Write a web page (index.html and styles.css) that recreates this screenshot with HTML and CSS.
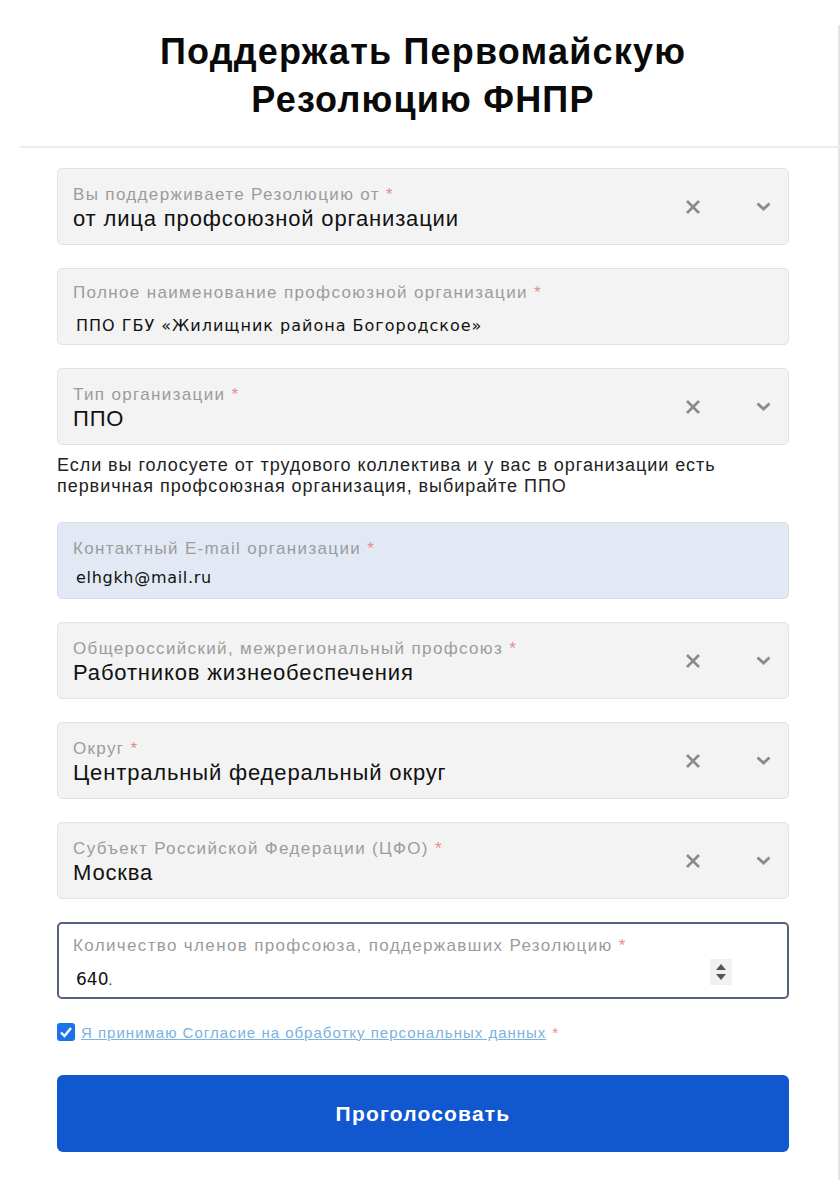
FILE: index.html
```html
<!DOCTYPE html>
<html lang="ru">
<head>
  <meta charset="UTF-8">
  <title>Поддержать Первомайскую Резолюцию ФНПР</title>
  <link rel="stylesheet" href="styles.css">
</head>
<body>

<div class="page">
  <header class="head">
    <h1>Поддержать Первомайскую<br>Резолюцию ФНПР</h1>
  </header>

  <form class="form">
    <div class="field">
      <div class="field-body">
        <div class="label">Вы поддерживаете Резолюцию от <span class="req">*</span></div>
        <div class="value">от лица профсоюзной организации</div>
      </div>
      <svg class="clear" width="16" height="14" viewBox="0 0 16 14"><path d="M2 1 L14 13 M14 1 L2 13" stroke="#8a8a8a" stroke-width="2.6"/></svg>
      <svg class="chevron" width="15" height="9" viewBox="0 0 15 9"><path d="M1.5 1.5 L7.5 7 L13.5 1.5" fill="none" stroke="#8a8a8a" stroke-width="2.8"/></svg>
    </div>

    <div class="field">
      <div class="field-body">
        <div class="label">Полное наименование профсоюзной организации <span class="req">*</span></div>
        <div class="value typed">ППО ГБУ «Жилищник района Богородское»</div>
      </div>
    </div>

    <div class="field">
      <div class="field-body">
        <div class="label">Тип организации <span class="req">*</span></div>
        <div class="value">ППО</div>
      </div>
      <svg class="clear" width="16" height="14" viewBox="0 0 16 14"><path d="M2 1 L14 13 M14 1 L2 13" stroke="#8a8a8a" stroke-width="2.6"/></svg>
      <svg class="chevron" width="15" height="9" viewBox="0 0 15 9"><path d="M1.5 1.5 L7.5 7 L13.5 1.5" fill="none" stroke="#8a8a8a" stroke-width="2.8"/></svg>
    </div>
    <p class="hint">Если вы голосуете от трудового коллектива и у вас в организации есть первичная профсоюзная организация, выбирайте ППО</p>

    <div class="field autofill">
      <div class="field-body">
        <div class="label">Контактный E-mail организации <span class="req">*</span></div>
        <div class="value typed">elhgkh@mail.ru</div>
      </div>
    </div>

    <div class="field">
      <div class="field-body">
        <div class="label">Общероссийский, межрегиональный профсоюз <span class="req">*</span></div>
        <div class="value">Работников жизнеобеспечения</div>
      </div>
      <svg class="clear" width="16" height="14" viewBox="0 0 16 14"><path d="M2 1 L14 13 M14 1 L2 13" stroke="#8a8a8a" stroke-width="2.6"/></svg>
      <svg class="chevron" width="15" height="9" viewBox="0 0 15 9"><path d="M1.5 1.5 L7.5 7 L13.5 1.5" fill="none" stroke="#8a8a8a" stroke-width="2.8"/></svg>
    </div>

    <div class="field">
      <div class="field-body">
        <div class="label">Округ <span class="req">*</span></div>
        <div class="value">Центральный федеральный округ</div>
      </div>
      <svg class="clear" width="16" height="14" viewBox="0 0 16 14"><path d="M2 1 L14 13 M14 1 L2 13" stroke="#8a8a8a" stroke-width="2.6"/></svg>
      <svg class="chevron" width="15" height="9" viewBox="0 0 15 9"><path d="M1.5 1.5 L7.5 7 L13.5 1.5" fill="none" stroke="#8a8a8a" stroke-width="2.8"/></svg>
    </div>

    <div class="field">
      <div class="field-body">
        <div class="label">Субъект Российской Федерации (ЦФО) <span class="req">*</span></div>
        <div class="value">Москва</div>
      </div>
      <svg class="clear" width="16" height="14" viewBox="0 0 16 14"><path d="M2 1 L14 13 M14 1 L2 13" stroke="#8a8a8a" stroke-width="2.6"/></svg>
      <svg class="chevron" width="15" height="9" viewBox="0 0 15 9"><path d="M1.5 1.5 L7.5 7 L13.5 1.5" fill="none" stroke="#8a8a8a" stroke-width="2.8"/></svg>
    </div>

    <div class="field focused">
      <div class="field-body">
        <div class="label">Количество членов профсоюза, поддержавших Резолюцию <span class="req">*</span></div>
        <div class="value typed">640<span class="caret">.</span></div>
      </div>
      <svg class="spin" width="22" height="26" viewBox="0 0 22 26"><rect width="22" height="26" fill="#f1f1f1"/><path d="M6 11 L11 5 L16 11 Z M6 15 L11 21 L16 15 Z" fill="#555"/></svg>
    </div>

    <label class="agree">
      <span class="check"><svg width="18" height="18" viewBox="0 0 18 18"><rect width="18" height="18" rx="3" fill="#1a73e8"/><path d="M4 9.5 L7.5 13 L14 5" fill="none" stroke="#fff" stroke-width="2.4"/></svg></span>
      <a href="#" class="agree-link">Я принимаю Согласие на обработку персональных данных</a>
      <span class="req">*</span>
    </label>

    <button type="button" class="submit">Проголосовать</button>
  </form>
</div>

</body>
</html>
```

FILE: styles.css
```css
body {
  margin: 0;
  background: #fff;
  font-family: "Liberation Sans", Arial, sans-serif;
  color: #111;
}
.page {
  width: 818px;
  margin: 25px 0 20px 20px;
  border-right: 2px solid #e4e4e4;
  min-height: 1155px;
}
.head {
  border-bottom: 2px solid #ececec;
  padding: 3px 0 22px;
  margin-right: -2px;
}
h1 {
  margin: 0;
  padding-right: 14px;
  text-align: center;
  font-size: 36px;
  line-height: 48px;
  font-weight: bold;
  color: #0a0a0a;
  letter-spacing: 1.2px;
}
.form {
  padding: 20px 49px 0 37px;
  display: flex;
  flex-direction: column;
}
.field {
  display: flex;
  align-items: center;
  height: 77px;
  box-sizing: border-box;
  background: #f3f3f3;
  border: 1px solid #e2e2e2;
  border-radius: 5px;
  padding: 0 17px 0 15px;
  margin-bottom: 23px;
}
.field-body {
  flex: 1;
  padding-top: 5px;
}
.label {
  color: #9c9c9c;
  font-size: 17px;
  line-height: 20px;
  letter-spacing: 1.35px;
}
.req {
  color: #e98a8a;
}
.value {
  font-size: 22px;
  line-height: 28px;
  color: #111;
  letter-spacing: 0.85px;
}
.value.typed {
  font-family: "DejaVu Sans", sans-serif;
  font-size: 16px;
  line-height: 20px;
  letter-spacing: 1px;
  margin-top: 13px;
  padding-left: 3px;
}
.clear {
  margin-right: 55px;
}
.hint {
  margin: -13px 0 25px;
  font-size: 18px;
  line-height: 21px;
  letter-spacing: 0.95px;
  color: #222;
}
.autofill {
  background: #e3e9f4;
  border-color: #d6dde9;
}
.autofill .typed {
  margin-top: 9px;
  letter-spacing: 0.7px;
}
.focused {
  background: #fff;
  border: 2px solid #51627a;
  padding-left: 14px;
}
.focused .typed {
  font-size: 17px;
  letter-spacing: 0;
  margin-top: 13px;
}
.caret {
  font-size: 12px;
}
.spin {
  margin-right: 38px;
  margin-top: 22px;
}
.agree {
  display: flex;
  align-items: center;
  gap: 6px;
  margin: 1px 0 34px;
  font-size: 15px;
  letter-spacing: 1px;
}
.check svg {
  display: block;
}
.agree-link {
  color: #7ab2e0;
  text-decoration: underline;
}
.submit {
  height: 77px;
  border: none;
  border-radius: 6px;
  background: #1157d0;
  color: #fff;
  font-family: "Liberation Sans", Arial, sans-serif;
  font-weight: bold;
  font-size: 21px;
  letter-spacing: 1.2px;
}
```
